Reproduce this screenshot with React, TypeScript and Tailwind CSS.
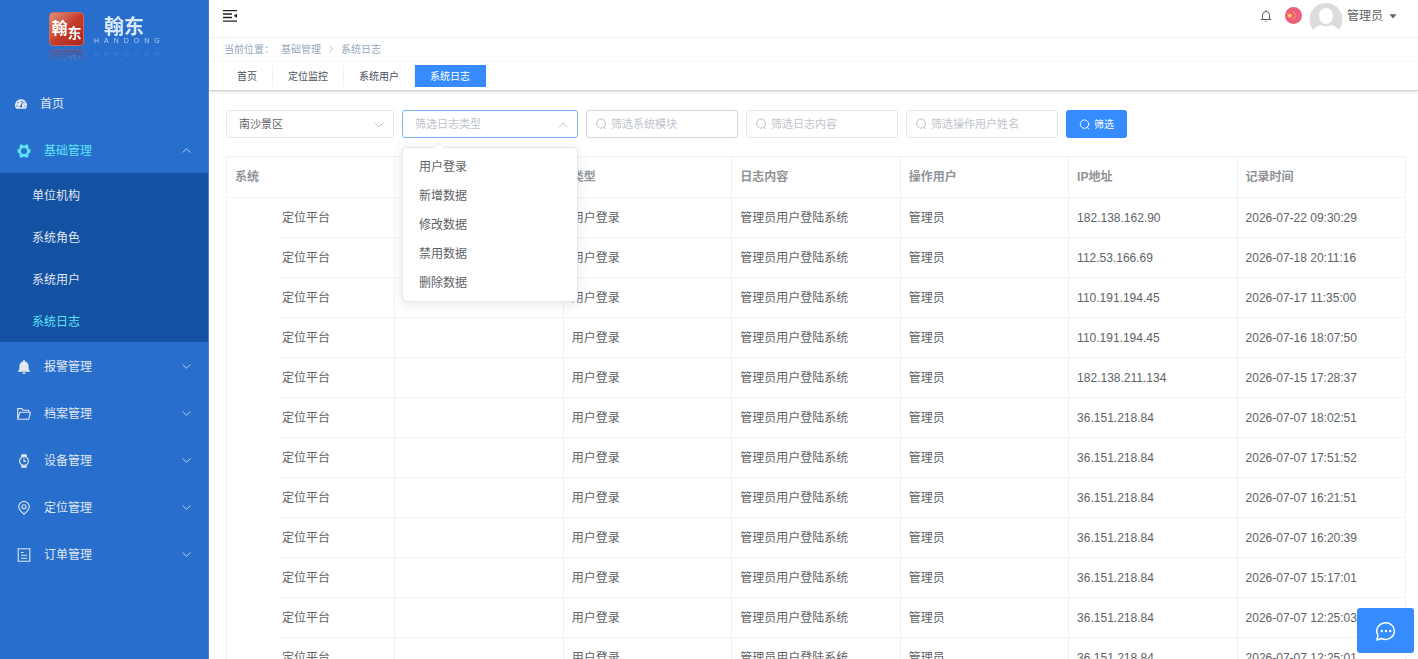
import { useState } from 'react'
import type { ReactNode } from 'react'
import { FaTachometerAlt } from 'react-icons/fa'

const subItems = ['单位机构', '系统角色', '系统用户', '系统日志']

const tabs = ['首页', '定位监控', '系统用户', '系统日志']

const logTypes = ['用户登录', '新增数据', '修改数据', '禁用数据', '删除数据']

const columns = ['系统', '', '类型', '日志内容', '操作用户', 'IP地址', '记录时间']

const logs = [
  { ip: '182.138.162.90', time: '2026-07-22 09:30:29' },
  { ip: '112.53.166.69', time: '2026-07-18 20:11:16' },
  { ip: '110.191.194.45', time: '2026-07-17 11:35:00' },
  { ip: '110.191.194.45', time: '2026-07-16 18:07:50' },
  { ip: '182.138.211.134', time: '2026-07-15 17:28:37' },
  { ip: '36.151.218.84', time: '2026-07-07 18:02:51' },
  { ip: '36.151.218.84', time: '2026-07-07 17:51:52' },
  { ip: '36.151.218.84', time: '2026-07-07 16:21:51' },
  { ip: '36.151.218.84', time: '2026-07-07 16:20:39' },
  { ip: '36.151.218.84', time: '2026-07-07 15:17:01' },
  { ip: '36.151.218.84', time: '2026-07-07 12:25:03' },
  { ip: '36.151.218.84', time: '2026-07-07 12:25:01' },
]

function Chevron({ up = false, className = '' }: { up?: boolean; className?: string }) {
  return (
    <svg className={className} viewBox="0 0 10 10" fill="none" stroke="currentColor" strokeLinecap="round" strokeLinejoin="round">
      <path d={up ? 'M1 7l4-4 4 4' : 'M1 3l4 4 4-4'} />
    </svg>
  )
}

function SearchIcon({ className = '' }: { className?: string }) {
  return (
    <svg className={className} viewBox="0 0 12 12" fill="none" stroke="currentColor" strokeLinecap="round">
      <circle cx="6" cy="5.6" r="4.6" />
      <path d="M9 9.2l1.800 1.800" />
    </svg>
  )
}

function GearIcon() {
  return (
    <svg className="w-3.5 h-3.5" viewBox="0 0 14 14">
      <path
        fill="currentColor"
        fillRule="evenodd"
        d="M3.400 .4h2l.8 1h1.600l.8-1h2l1.100 1.900-.5 1.300.9 1.500 1.400.4v3l-1.400.4-.9 1.500.5 1.300-1.100 1.900h-2l-.8-1H6.200l-.8 1h-2l-1.100-1.900.5-1.300-.9-1.500-1.400-.4v-3l1.400-.4.9-1.500-.5-1.300zM7 4a3 3 0 100 6 3 3 0 000-6z"
      />
    </svg>
  )
}

function AlarmIcon() {
  return (
    <svg className="w-3.5 h-3.5" viewBox="0 0 14 14" fill="currentColor">
      <path d="M7 0a1 1 0 011 1v.4c2.200.5 3.600 2.300 3.600 4.600v3.200l1.600 2v.6H.8v-.6l1.600-2V6c0-2.300 1.400-4.100 3.600-4.600V1a1 1 0 011-1zM5.300 12.400h3.400a1.700 1.500 0 01-3.400 0z" />
    </svg>
  )
}

function FolderIcon() {
  return (
    <svg className="w-3.5 h-3.5" viewBox="0 0 14 14" fill="none" stroke="currentColor" strokeWidth="1.100" strokeLinejoin="round">
      <path d="M.7 12.200V1.600h4.200l1.400 1.700h5.500v2M.7 12.200l2.200-6.900h10.500l-1.600 6.900z" />
    </svg>
  )
}

function WatchIcon() {
  return (
    <svg className="w-3.5 h-3.5" viewBox="0 0 14 14" fill="none" stroke="currentColor" strokeWidth="1.200">
      <circle cx="7" cy="7" r="4.400" />
      <path d="M4.800 3V.8h4.400V3M4.800 11v2.200h4.400V11M4.800 1.300h4.400M4.800 12.700h4.400M7 4.600V7.300h2" />
    </svg>
  )
}

function PinIcon() {
  return (
    <svg className="w-3.5 h-3.5" viewBox="0 0 14 14" fill="none" stroke="currentColor" strokeWidth="1.100">
      <path d="M7 13.200C3.500 10.200 1.700 8 1.700 5.800a5.300 5.300 0 0110.600 0c0 2.200-1.800 4.400-5.300 7.400z" />
      <circle cx="7" cy="5.700" r="2" />
    </svg>
  )
}

function OrderIcon() {
  return (
    <svg className="w-3.5 h-3.5" viewBox="0 0 14 14" fill="none" stroke="currentColor" strokeWidth="1.100">
      <path d="M1.200 .7h11.600v12.600H1.200zM4 4.500h2.500M4 7.300h6M4 10.300h6" />
    </svg>
  )
}

function ChatIcon() {
  return (
    <svg className="w-[22px] h-[22px]" viewBox="0 0 22 22" fill="none" stroke="currentColor" strokeWidth="1.500" strokeLinejoin="round">
      <path d="M2 20l.9-4.900a8.800 8.300 0 1 1 3.800 3.400z" />
      <g fill="currentColor" stroke="none">
        <circle cx="6.800" cy="11" r="1.200" />
        <circle cx="11" cy="11" r="1.200" />
        <circle cx="15.200" cy="11" r="1.200" />
      </g>
    </svg>
  )
}

const menu: { name: string; icon: ReactNode }[] = [
  { name: '报警管理', icon: <AlarmIcon /> },
  { name: '档案管理', icon: <FolderIcon /> },
  { name: '设备管理', icon: <WatchIcon /> },
  { name: '定位管理', icon: <PinIcon /> },
  { name: '订单管理', icon: <OrderIcon /> },
]

function Logo() {
  return (
    <div className="h-[79px] pt-3 pl-[49px] flex items-start">
      <div className="flex gap-2.5 [-webkit-box-reflect:below_3px_linear-gradient(transparent_60%,rgba(0,0,0,0.3))]">
        <div className="w-[35px] h-[34px] rounded-sm border border-[#d0685c] bg-linear-to-br from-[#dc8e78] via-[#c73c2a] to-[#a8281c] text-white font-bold leading-none flex justify-center">
          <span className="text-base pt-1">翰</span>
          <span className="text-sm self-end pb-0.5">东</span>
        </div>
        <div className="flex flex-col text-[#dbe8fa]">
          <span className="text-[20px] leading-[22px] pt-1 pl-2.5 font-bold">翰东</span>
          <span className="text-[7px] leading-[6px] tracking-[5px] text-[#b5d0f4]">HANDONG</span>
        </div>
      </div>
    </div>
  )
}

function Sidebar() {
  return (
    <aside className="w-[209px] shrink-0 bg-[#276ecd] border-r border-[#4382d8] text-xs text-[#e3e8f0]">
      <Logo />
      <nav>
        <a href="#" className="h-[47px] pt-0.5 pl-[15px] flex items-center gap-[13px]">
          <FaTachometerAlt className="w-3 h-3" />
          首页
        </a>
        <button className="w-full h-[47px] pt-0.5 pl-[17px] pr-[17px] flex items-center text-[#5fe3f9]">
          <GearIcon />
          <span className="ml-[13px]">基础管理</span>
          <Chevron up className="w-[9px] h-[9px] ml-auto text-[#c8dcf6]" />
        </button>
        <div className="pt-px bg-[#1351a3]">
          {subItems.map((name) => (
            <a
              key={name}
              href="#"
              className={`h-[42px] pt-0.5 pl-8 flex items-center ${name === '系统日志' ? 'text-[#5fe3f9]' : ''}`}
            >
              {name}
            </a>
          ))}
        </div>
        {menu.map((item) => (
          <button key={item.name} className="w-full h-[47px] pt-0.5 pl-[17px] pr-[17px] flex items-center">
            {item.icon}
            <span className="ml-[13px]">{item.name}</span>
            <Chevron className="w-[9px] h-[9px] ml-auto text-[#c8dcf6]" />
          </button>
        ))}
      </nav>
    </aside>
  )
}

function Header() {
  return (
    <header className="shrink-0 border-b border-[#d4d4d4] shadow-sm">
      <div className="h-[37px] pl-3.5 pr-[21px] pb-1.5 flex items-center">
        <button aria-label="收起菜单">
          <svg className="w-3.5 h-3" viewBox="0 0 14 12">
            <path d="M0 .6h14M0 4h9M0 7.500h9M0 11.200h14" stroke="#222" strokeWidth="1.300" />
            <path d="M14 3.500v4.500L10.800 5.750z" fill="#222" />
          </svg>
        </button>
        <div className="ml-auto flex items-center">
          <button aria-label="消息">
            <svg className="w-3 h-3" viewBox="0 0 12 12" fill="none" stroke="#606266">
              <path d="M2.500 9.500V5a3.500 3.500 0 017 0v4.500M.8 9.500h10.400M6 .2v1.300M5.300 11.300h1.400" />
            </svg>
          </button>
          <svg className="w-[17px] h-[17px] ml-[13px]" viewBox="0 0 17 17">
            <circle cx="8.500" cy="8.500" r="8.500" fill="#ea5f7b" />
            <path d="M4.800 5.800l.8 1.800 2 .1-1.500 1.300.5 2-1.800-1.100L3 11l.5-2L2 7.700l2-.1z" fill="#fcd34d" />
            <path d="M8 5.200l1.300.6M10 6.800l.5 1.300M10.400 9.500l-.5 1.300M8 12.300l1.300-.6" stroke="#fcd34d" />
          </svg>
          <button className="ml-[7px] flex items-center text-xs text-[#606266]">
            <svg className="w-[34px] h-[26px]" viewBox="0 0 34 26">
              <circle cx="17" cy="16.500" r="16.500" fill="#dcdcdc" />
              <ellipse cx="17" cy="30" rx="13.500" ry="9" fill="#fff" />
              <ellipse cx="17" cy="13" rx="9" ry="10.500" fill="#dcdcdc" />
              <ellipse cx="17" cy="13" rx="7" ry="8" fill="#fff" />
            </svg>
            <span className="ml-1">管理员</span>
            <svg className="w-2 h-2 ml-1.5" viewBox="0 0 8 8">
              <path d="M.5 2.200h7L4 6.500z" fill="#606266" />
            </svg>
          </button>
        </div>
      </div>

      <div className="h-6 pb-px pl-[15px] flex items-center border-t border-[#f0f0f0] text-[10px] text-[#97a8be]">
        <span>当前位置：</span>
        <a href="#" className="ml-[7px]">基础管理</a>
        <Chevron className="w-2 h-2 mx-1.5 -rotate-90 text-[#b4bccc]" />
        <span>系统日志</span>
      </div>

      <div className="h-[29px] pl-[13px] flex items-center border-t border-[#f8f8f8]">
        {tabs.map((name) => (
          <a
            key={name}
            href="#"
            className={`h-[22px] px-[15px] flex items-center border-r text-[10px] ${
              name === '系统日志' ? 'bg-[#368cff] border-[#368cff] text-white' : 'border-[#f2f2f2] text-[#495060]'
            }`}
          >
            {name}
          </a>
        ))}
      </div>
    </header>
  )
}

function SearchInput({ label, border }: { label: string; border: string }) {
  return (
    <label className={`w-[152px] h-7 px-2 flex items-center gap-1 border rounded-[3px] ${border}`}>
      <SearchIcon className="w-3 h-3 shrink-0 text-[#c0c4cc]" />
      <input
        type="text"
        aria-label={label}
        placeholder={label}
        className="w-full min-w-0 text-[11px] text-[#606266] outline-none placeholder:text-[#c0c4cc]"
      />
    </label>
  )
}

function Filters() {
  const [type, setType] = useState('')
  const [open, setOpen] = useState(true)

  return (
    <div className="flex gap-2">
      <div className="relative w-[168px]">
        <select
          aria-label="景区"
          className="w-full h-7 pl-3 appearance-none border border-[#e6e8ed] rounded-[3px] bg-white text-[11px] text-[#606266]"
        >
          <option>南沙景区</option>
        </select>
        <Chevron className="absolute right-2.5 top-2.5 w-2.5 h-2.5 text-[#c0c4cc] pointer-events-none" />
      </div>

      <div className="relative w-[176px]">
        <select
          aria-label="筛选日志类型"
          value={type}
          onChange={(e) => setType(e.target.value)}
          className="w-full h-7 pl-3 appearance-none border border-[#7db3fb] rounded-[3px] bg-white text-[11px] text-[#c0c4cc] outline-none"
        >
          <option value="">筛选日志类型</option>
          {logTypes.map((name) => (
            <option key={name}>{name}</option>
          ))}
        </select>
        <Chevron up className="absolute right-2.5 top-2.5 w-2.5 h-2.5 text-[#c0c4cc] pointer-events-none" />

        {/* Dropdown */}
        {open && (
          <div className="absolute inset-x-0 top-[37px] z-10 py-1 border border-[#e4e7ed] rounded-sm bg-white shadow-[0_2px_12px_rgba(0,0,0,0.1)]">
            <span className="absolute left-8 -top-1 w-2 h-2 rotate-45 border-t border-l border-[#ebeef5] bg-white" />
            {logTypes.map((name) => (
              <button
                key={name}
                onClick={() => {
                  setType(name)
                  setOpen(false)
                }}
                className="relative w-full h-[29px] px-4 flex items-center text-xs text-[#606266]"
              >
                {name}
              </button>
            ))}
          </div>
        )}
      </div>

      <SearchInput label="筛选系统模块" border="border-[#d3d6de]" />
      <SearchInput label="筛选日志内容" border="border-[#e6e8ed]" />
      <SearchInput label="筛选操作用户姓名" border="border-[#e6e8ed]" />

      <button className="w-[61px] h-7 flex items-center justify-center gap-1 rounded-[3px] bg-[#368cff] text-[10px] text-white">
        <SearchIcon className="w-[11px] h-[11px]" />
        筛选
      </button>
    </div>
  )
}

function LogTable() {
  const cell = 'px-2 border-b border-r border-[#f0f2f7]'

  return (
    <table className="mt-[18px] w-full table-fixed border-separate border-spacing-0 border-t border-l border-[#f0f2f7] text-xs text-[#606266]">
      <thead>
        <tr className="h-[41px] text-left text-[#909399]">
          {columns.map((name) => (
            <th key={name} className={`${cell} font-bold`}>{name}</th>
          ))}
        </tr>
      </thead>
      <tbody>
        {logs.map((log) => (
          <tr key={log.time} className="h-10">
            <td className="pl-[55px] border-r border-[#f0f2f7]">
              <div className="h-10 flex items-center border-b border-[#f0f2f7]">定位平台</div>
            </td>
            <td className={cell}></td>
            <td className={cell}>用户登录</td>
            <td className={cell}>管理员用户登陆系统</td>
            <td className={cell}>管理员</td>
            <td className={cell}>{log.ip}</td>
            <td className={cell}>{log.time}</td>
          </tr>
        ))}
      </tbody>
    </table>
  )
}

export default function App() {
  return (
    <div className="h-screen flex overflow-hidden bg-white font-['Liberation_Sans','Noto_Sans_CJK_SC',sans-serif]">
      <Sidebar />
      <div className="flex-1 min-w-0 flex flex-col">
        <Header />
        <main className="flex-1 min-h-0 pt-[19px] pl-[17px] pr-3 overflow-y-auto [scrollbar-width:none]">
          <Filters />
          <LogTable />
        </main>
      </div>

      <button
        aria-label="在线客服"
        className="fixed right-1 bottom-1.5 z-20 w-[57px] h-[45px] flex items-center justify-center rounded-[3px] bg-[#368cff] text-white"
      >
        <ChatIcon />
      </button>
    </div>
  )
}
